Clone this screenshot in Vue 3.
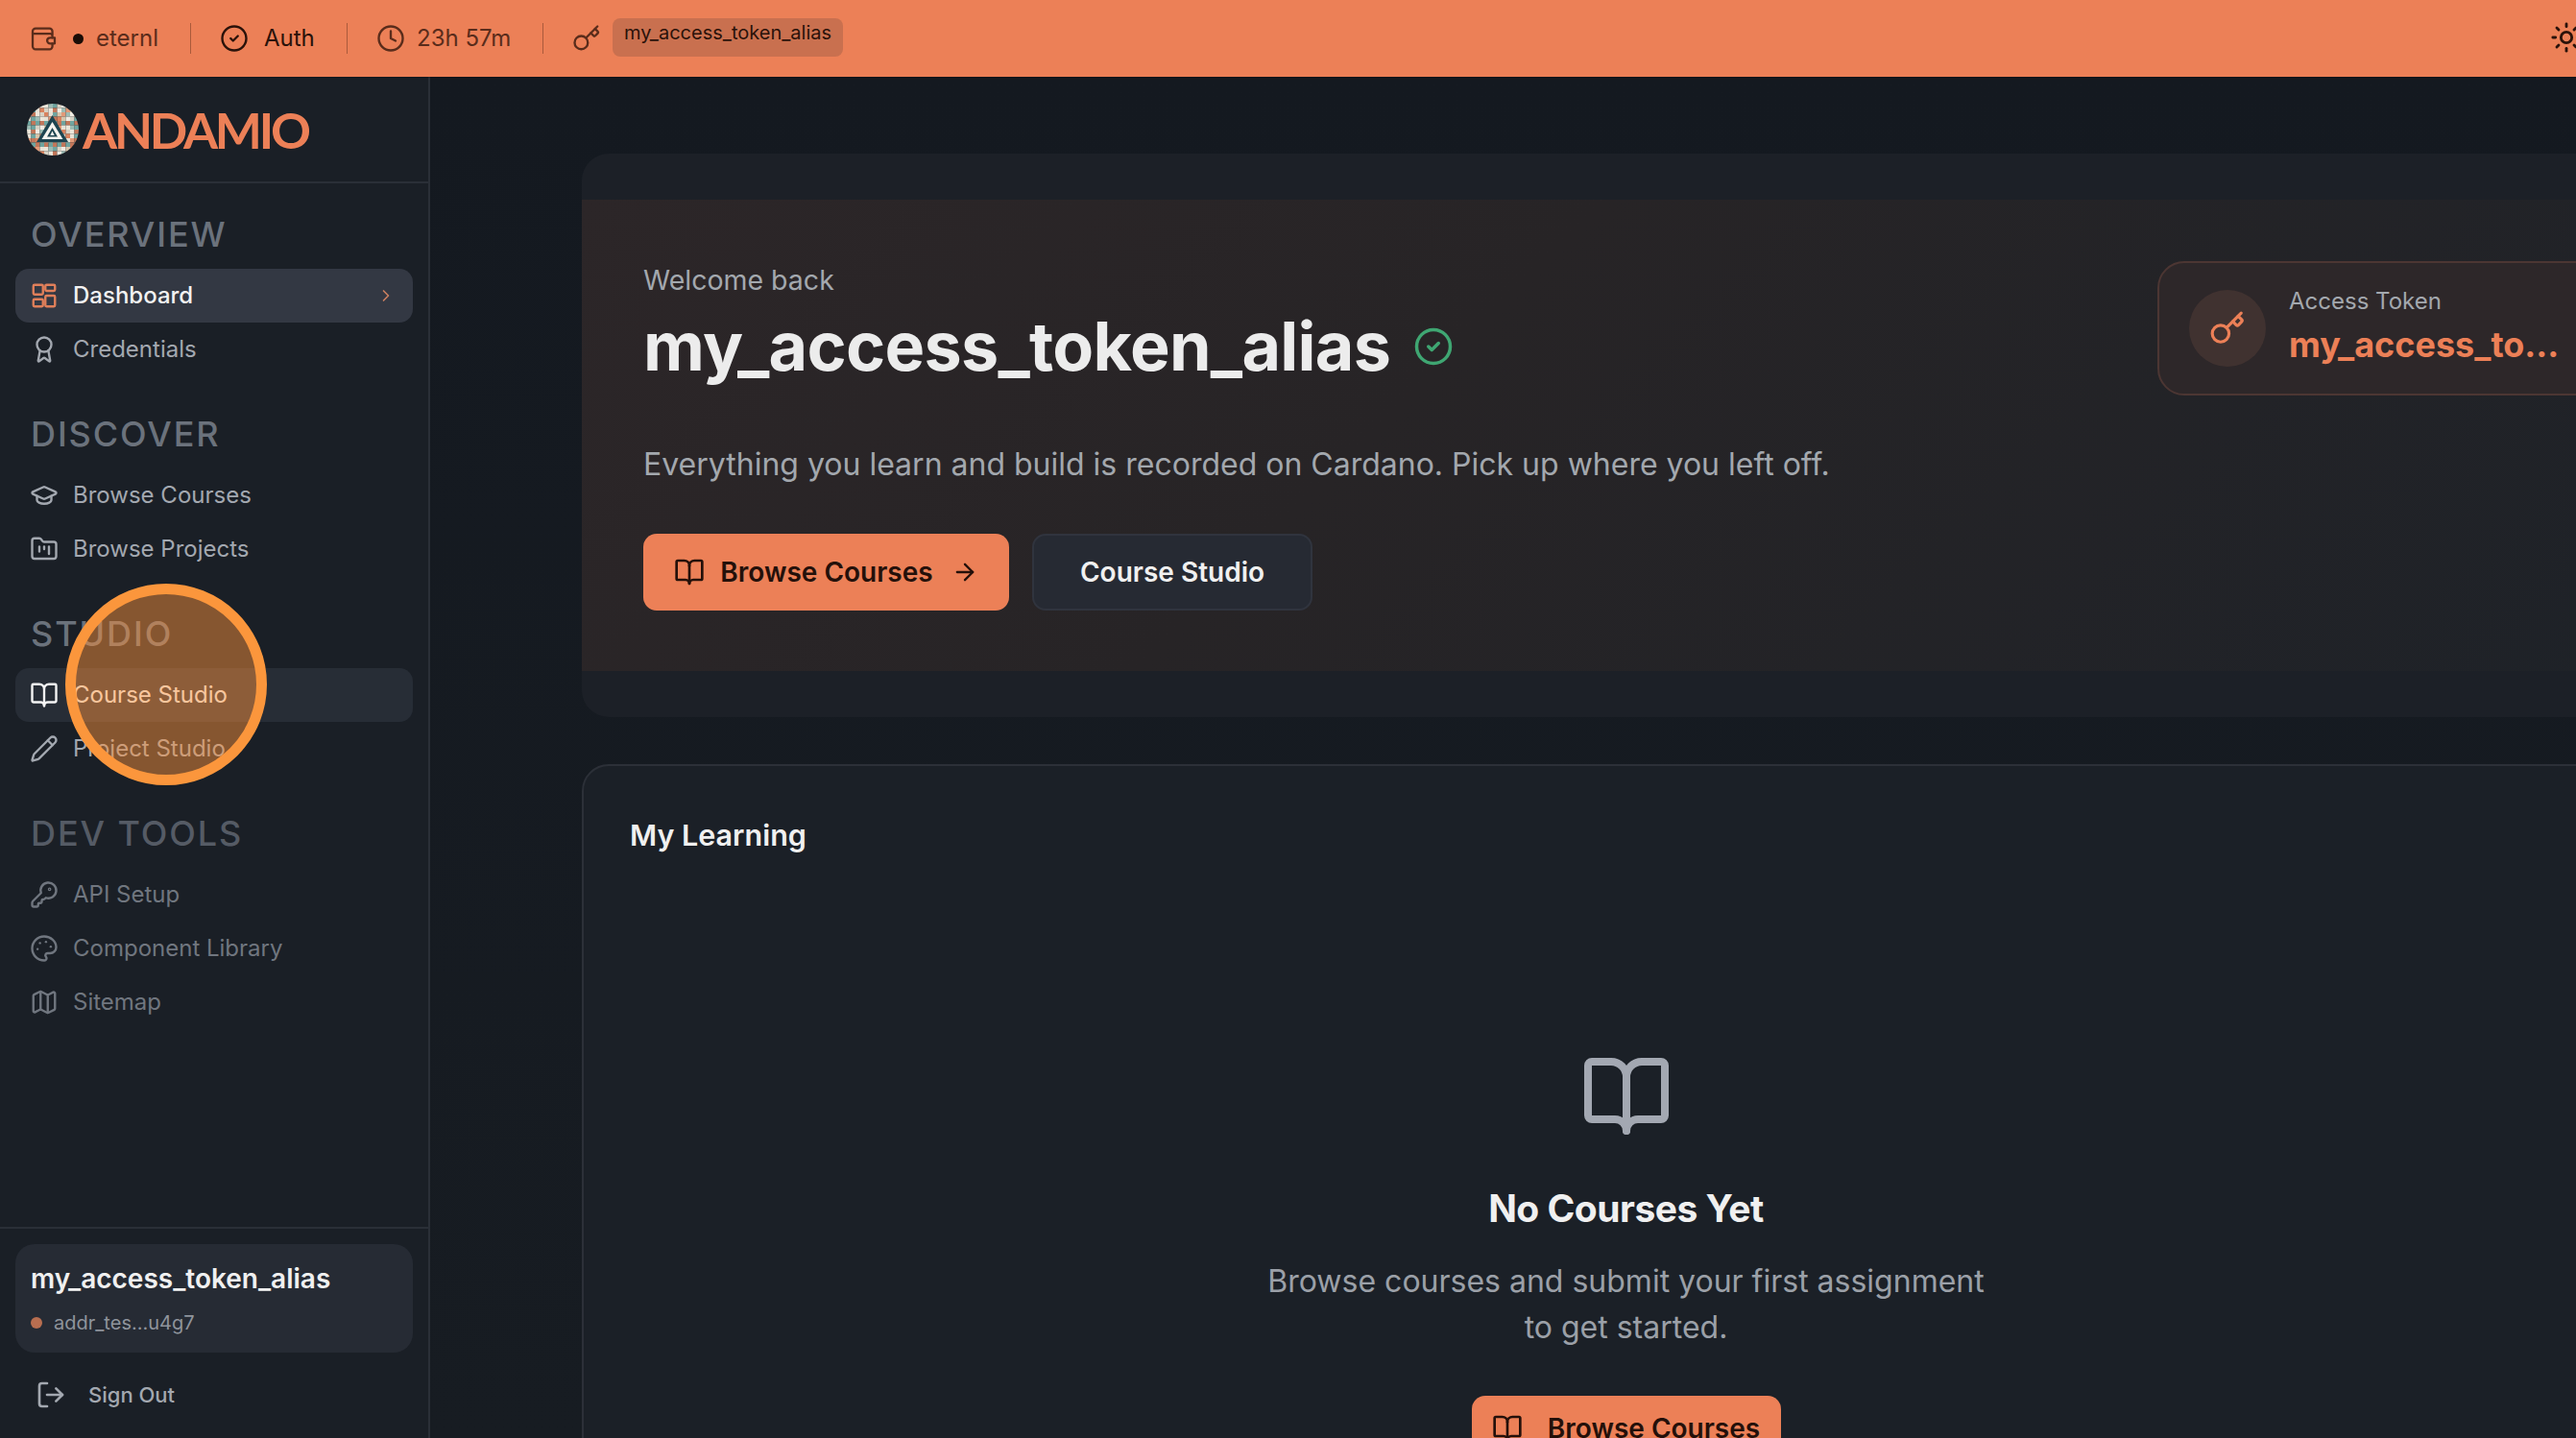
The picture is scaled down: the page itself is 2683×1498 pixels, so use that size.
<script setup>
const icons = {
  grid: { d: ['M4 3h6a1 1 0 0 1 1 1v6a1 1 0 0 1-1 1H4a1 1 0 0 1-1-1V4a1 1 0 0 1 1-1z', 'M14 3h6a1 1 0 0 1 1 1v3a1 1 0 0 1-1 1h-6a1 1 0 0 1-1-1V4a1 1 0 0 1 1-1z', 'M14 12h6a1 1 0 0 1 1 1v7a1 1 0 0 1-1 1h-6a1 1 0 0 1-1-1v-7a1 1 0 0 1 1-1z', 'M4 15h6a1 1 0 0 1 1 1v4a1 1 0 0 1-1 1H4a1 1 0 0 1-1-1v-4a1 1 0 0 1 1-1z'] },
  award: { d: ['M15.477 12.89l1.515 8.526a.5.5 0 0 1-.81.47l-3.58-2.687a1 1 0 0 0-1.197 0l-3.586 2.686a.5.5 0 0 1-.81-.469l1.514-8.526', 'M18 8a6 6 0 1 1-12 0 6 6 0 0 1 12 0z'] },
  cap: { d: ['M21.42 10.922a1 1 0 0 0-.019-1.838L12.83 5.18a2 2 0 0 0-1.66 0L2.6 9.08a1 1 0 0 0 0 1.832l8.57 3.908a2 2 0 0 0 1.66 0z', 'M6 12.5V16a6 3 0 0 0 12 0v-3.5'] },
  folder: { d: ['M4 20h16a2 2 0 0 0 2-2V8a2 2 0 0 0-2-2h-7.93a2 2 0 0 1-1.66-.9l-.82-1.2A2 2 0 0 0 7.93 3H4a2 2 0 0 0-2 2v13c0 1.1.9 2 2 2Z', 'M8 10v4', 'M12 10v2', 'M16 10v6'] },
  book: { d: ['M12 7v14', 'M3 18a1 1 0 0 1-1-1V4a1 1 0 0 1 1-1h5a4 4 0 0 1 4 4 4 4 0 0 1 4-4h5a1 1 0 0 1 1 1v13a1 1 0 0 1-1 1h-6a3 3 0 0 0-3 3 3 3 0 0 0-3-3z'] },
  pencil: { d: ['M21.174 6.812a1 1 0 0 0-3.986-3.987L3.842 16.174a2 2 0 0 0-.5.83l-1.321 4.352a.5.5 0 0 0 .623.622l4.353-1.32a2 2 0 0 0 .83-.497z', 'M15 5l4 4'] },
  keyRound: { d: ['M2.586 17.414A2 2 0 0 0 2 18.828V21a1 1 0 0 0 1 1h3a1 1 0 0 0 1-1v-1a1 1 0 0 1 1-1h1a1 1 0 0 0 1-1v-1a1 1 0 0 1 1-1h.172a2 2 0 0 0 1.414-.586l.814-.814a6.5 6.5 0 1 0-4-4z', 'M17 7.5a.5.5 0 1 1-1 0 .5.5 0 0 1 1 0z'] },
  palette: { d: ['M12 22a1 1 0 0 1 0-20 10 9 0 0 1 10 9 5 5 0 0 1-5 5h-2.25a1.75 1.75 0 0 0-1.4 2.8l.3.4a1.75 1.75 0 0 1-1.4 2.8z', 'M13.5 6.5h.01', 'M17.5 10.5h.01', 'M6.5 12.5h.01', 'M8.5 7.5h.01'] },
  map: { d: ['M14.106 5.553a2 2 0 0 0 1.788 0l3.659-1.83A1 1 0 0 1 21 4.619v12.764a1 1 0 0 1-.553.894l-4.553 2.277a2 2 0 0 1-1.788 0l-4.212-2.106a2 2 0 0 0-1.788 0l-3.659 1.83A1 1 0 0 1 3 19.381V6.618a1 1 0 0 1 .553-.894l4.553-2.277a2 2 0 0 1 1.788 0z', 'M15 5.764v15', 'M9 3.236v15'] },
  logout: { d: ['M16 17l5-5-5-5', 'M21 12H9', 'M9 21H5a2 2 0 0 1-2-2V5a2 2 0 0 1 2-2h4'] },
  key: { d: ['M15.5 7.5l2.3 2.3a1 1 0 0 0 1.4 0l2.1-2.1a1 1 0 0 0 0-1.4L19 4', 'M21 2l-9.6 9.6', 'M13 15.5a5.5 5.5 0 1 1-11 0 5.5 5.5 0 0 1 11 0z'] },
  sun: { d: ['M16 12a4 4 0 1 1-8 0 4 4 0 0 1 8 0z', 'M12 2v2', 'M12 20v2', 'M4.93 4.93l1.41 1.41', 'M17.66 17.66l1.41 1.41', 'M2 12h2', 'M20 12h2', 'M6.34 17.66l-1.41 1.41', 'M19.07 4.93l-1.41 1.41'] },
  check: { d: ['M22 12a10 10 0 1 1-20 0 10 10 0 0 1 20 0z', 'M9 12l2 2 4-4'] },
  clock: { d: ['M22 12a10 10 0 1 1-20 0 10 10 0 0 1 20 0z', 'M12 6v6l4 2'] },
  arrow: { d: ['M5 12h14', 'M12 5l7 7-7 7'] },
  chevron: { d: ['M9 18l6-6-6-6'] },
  wallet: { d: ['M19.5 8V5.500A2.500 2.500 0 0 0 17 3H5a2.500 2.500 0 0 0-2.500 2.500v13A2.500 2.500 0 0 0 5 21h12a2.500 2.500 0 0 0 2.500-2.500V16', 'M2.500 7.500H17.500a2 2 0 0 1 2 2V11', 'M17.500 11h4v5h-4a2.500 2.500 0 0 1 0-5z'] },
}
const sections = [
  { title: 'OVERVIEW', dim: false, items: [
    { label: 'Dashboard', icon: 'grid', state: 'active' },
    { label: 'Credentials', icon: 'award' },
  ] },
  { title: 'DISCOVER', dim: false, items: [
    { label: 'Browse Courses', icon: 'cap' },
    { label: 'Browse Projects', icon: 'folder' },
  ] },
  { title: 'STUDIO', dim: false, items: [
    { label: 'Course Studio', icon: 'book', state: 'hover' },
    { label: 'Project Studio', icon: 'pencil' },
  ] },
  { title: 'DEV TOOLS', dim: true, items: [
    { label: 'API Setup', icon: 'keyRound' },
    { label: 'Component Library', icon: 'palette' },
    { label: 'Sitemap', icon: 'map' },
  ] },
]
const tiles = []
const tileColors = ['#d9835f', '#e8e2d6', '#6fa5a0', '#d6c6ac', '#e29a78', '#9dbcb4', '#f0ebe2', '#c2775a', '#ece6da', '#d8d2c4']
for (let y = 0; y < 12; y++) {
  for (let x = 0; x < 12; x++) {
    tiles.push({ x: x * 4.5, y: y * 4.5, c: tileColors[(x * 7 + y * 3 + x * y * 2) % tileColors.length] })
  }
}
</script>

<template>
  <div class="viewport">
    <header class="topbar">
      <div class="tb-group tb-wallet">
        <svg class="ic tb-ic wallet-ic soft" viewBox="0 0 24 24"><path v-for="p in icons.wallet.d" :key="p" :d="p" /></svg>
        <span class="tb-dot"></span>
        <span class="tb-text soft">eternl</span>
      </div>
      <span class="tb-div"></span>
      <div class="tb-group tb-auth">
        <svg class="ic tb-ic" viewBox="0 0 24 24"><path v-for="p in icons.check.d" :key="p" :d="p" /></svg>
        <span class="tb-text">Auth</span>
      </div>
      <span class="tb-div"></span>
      <div class="tb-group tb-time">
        <svg class="ic tb-ic soft" viewBox="0 0 24 24"><path v-for="p in icons.clock.d" :key="p" :d="p" /></svg>
        <span class="tb-text soft">23h 57m</span>
      </div>
      <span class="tb-div"></span>
      <div class="tb-group tb-key">
        <svg class="ic tb-ic soft" viewBox="0 0 24 24"><path v-for="p in icons.key.d" :key="p" :d="p" /></svg>
        <span class="tb-chip">my_access_token_alias</span>
      </div>
      <svg class="ic tb-sun" viewBox="0 0 24 24"><path v-for="p in icons.sun.d" :key="p" :d="p" /></svg>
    </header>

    <div class="body">
      <aside class="sidebar">
        <div class="brand">
          <svg class="logo-mark" viewBox="0 0 54 54">
            <defs><clipPath id="logoClip"><circle cx="27" cy="27" r="27" /></clipPath></defs>
            <g clip-path="url(#logoClip)">
              <rect v-for="(t, i) in tiles" :key="i" :x="t.x" :y="t.y" width="4.5" height="4.5" :fill="t.c" />
              <path d="M26.500 12 L43 40 H10 Z" fill="#1d4450" />
              <path d="M26.500 19 L37.500 37 H15.500 Z" fill="#f6f4ef" />
              <path d="M26.500 25 L32 34.500 H21 Z" fill="#1d4450" />
              <path d="M26.500 28.500 L28.700 33 H24.300 Z" fill="#f6f4ef" />
            </g>
          </svg>
          <span class="logo-text">ANDAMIO</span>
        </div>

        <nav class="nav">
          <section v-for="s in sections" :key="s.title" class="nav-sec" :class="{ dim: s.dim }">
            <h3 class="nav-title">{{ s.title }}</h3>
            <a v-for="it in s.items" :key="it.label" class="nav-item" :class="it.state">
              <svg class="ic nav-ic" viewBox="0 0 24 24"><path v-for="p in icons[it.icon].d" :key="p" :d="p" /></svg>
              <span>{{ it.label }}</span>
              <svg v-if="it.state === 'active'" class="ic nav-chev" viewBox="0 0 24 24"><path v-for="p in icons.chevron.d" :key="p" :d="p" /></svg>
            </a>
          </section>
        </nav>

        <div class="side-foot">
          <div class="user-card">
            <div class="user-name">my_access_token_alias</div>
            <div class="user-addr"><span class="addr-dot"></span>addr_tes...u4g7</div>
          </div>
          <a class="signout">
            <svg class="ic so-ic" viewBox="0 0 24 24"><path v-for="p in icons.logout.d" :key="p" :d="p" /></svg>
            <span>Sign Out</span>
          </a>
        </div>
      </aside>

      <main class="main">
        <section class="hero-card">
          <div class="hero">
            <div class="hero-left">
              <div class="welcome">Welcome back</div>
              <div class="hero-name">
                <h1>my_access_token_alias</h1>
                <svg class="ic verified" viewBox="0 0 24 24"><path v-for="p in icons.check.d" :key="p" :d="p" /></svg>
              </div>
              <p class="hero-desc">Everything you learn and build is recorded on Cardano. Pick up where you left off.</p>
              <div class="hero-actions">
                <button class="btn primary">
                  <svg class="ic btn-ic" viewBox="0 0 24 24"><path v-for="p in icons.book.d" :key="p" :d="p" /></svg>
                  <span>Browse Courses</span>
                  <svg class="ic btn-arrow" viewBox="0 0 24 24"><path v-for="p in icons.arrow.d" :key="p" :d="p" /></svg>
                </button>
                <button class="btn ghost">Course Studio</button>
              </div>
            </div>
            <div class="token-card">
              <span class="token-circle">
                <svg class="ic token-ic" viewBox="0 0 24 24"><path v-for="p in icons.key.d" :key="p" :d="p" /></svg>
              </span>
              <div class="token-text">
                <div class="token-label">Access Token</div>
                <div class="token-value">my_access_to...</div>
              </div>
            </div>
          </div>
        </section>

        <section class="learn-card">
          <h2 class="learn-title">My Learning</h2>
          <div class="empty">
            <svg class="ic empty-ic" viewBox="0 0 24 24"><path v-for="p in icons.book.d" :key="p" :d="p" /></svg>
            <h3 class="empty-title">No Courses Yet</h3>
            <p class="empty-desc">Browse courses and submit your first assignment<br />to get started.</p>
            <button class="btn primary empty-btn">
              <svg class="ic btn-ic" viewBox="0 0 24 24"><path v-for="p in icons.book.d" :key="p" :d="p" /></svg>
              <span>Browse Courses</span>
            </button>
          </div>
        </section>
      </main>
    </div>

    <div class="cursor-ring"></div>
  </div>
</template>

<style>
html, body { margin: 0; background: #14191f; }
</style>

<style scoped>
.viewport {
  position: relative;
  width: 2683px;
  height: 1498px;
  overflow: hidden;
  background: #14191f;
  font-family: Inter, "Noto Sans", sans-serif;
  color: #eceded;
}
.ic { fill: none; stroke: currentColor; stroke-width: 2; stroke-linecap: round; stroke-linejoin: round; flex: none; display: block; }

.topbar {
  width: 2690px;
  height: 80px;
  box-sizing: border-box;
  padding-left: 31px;
  display: flex;
  align-items: center;
  background: #ec8057;
  color: #2a120a;
  box-shadow: 0 1px 2px rgba(0,0,0,.3);
  position: relative;
  z-index: 2;
}
.tb-group { display: flex; align-items: center; }
.tb-ic { width: 30px; height: 30px; stroke-width: 1.9; }
.wallet-ic { width: 29px; height: 29px; }
.soft { color: #5a2c1b; }
.tb-text { font-size: 24px; line-height: 32px; }
.tb-wallet { width: 167px; }
.tb-dot { width: 11px; height: 11px; border-radius: 50%; background: #1a0c06; margin: 0 13px 0 16px; }
.tb-div { width: 1px; height: 32px; background: rgba(90,44,27,.45); }
.tb-auth { margin-left: 30px; width: 132px; gap: 16px; }
.tb-time { margin-left: 30px; width: 173px; gap: 12px; }
.tb-key { margin-left: 30px; gap: 12px; }
.tb-chip {
  width: 240px;
  height: 40px;
  box-sizing: border-box;
  margin-top: -2px;
  padding-top: 2px;
  border-radius: 8px;
  background: #c9704f;
  color: #2a120a;
  font-size: 20px;
  line-height: 26px;
  text-align: center;
}
.tb-sun { width: 34px; height: 34px; margin-left: auto; margin-top: -2px; color: #2a120a; }

.body { display: flex; width: 2942px; height: 1418px; }

.sidebar {
  width: 448px;
  height: 1418px;
  flex: none;
  box-sizing: border-box;
  background: #1a1f26;
  border-right: 2px solid #2a2f37;
  display: flex;
  flex-direction: column;
}
.brand {
  height: 111px;
  box-sizing: border-box;
  border-bottom: 2px solid #2a2f37;
  padding-left: 28px;
  display: flex;
  align-items: center;
  gap: 4px;
}
.logo-mark { width: 54px; height: 54px; flex: none; }
.logo-text {
  font-family: Lato, sans-serif;
  font-weight: 700;
  font-size: 52px;
  line-height: 60px;
  letter-spacing: -3.2px;
  color: #ec8057;
}
.nav { flex: 1; padding: 31px 16px 0; box-sizing: border-box; display: flex; flex-direction: column; gap: 38px; }
.nav-title {
  margin: 0 0 14px;
  padding-left: 16px;
  font-size: 36px;
  line-height: 44px;
  font-weight: 500;
  letter-spacing: 1.9px;
  color: #6b727c;
}
.nav-item {
  height: 56px;
  display: flex;
  align-items: center;
  padding: 0 18px 1px 15px;
  box-sizing: border-box;
  border-radius: 14px;
  color: #a3a8b0;
  font-size: 24px;
  font-weight: 400;
  gap: 15px;
}
.nav-ic { width: 30px; height: 30px; stroke-width: 1.9; }
.nav-item.active { background: #333843; color: #f2f2f2; font-weight: 500; }
.nav-item.active .nav-ic { color: #e07f5a; }
.nav-chev { width: 20px; height: 20px; margin-left: auto; color: #c97f60; stroke-width: 2; }
.nav-item.hover { background: #272d36; color: #f5f5f5; }
.nav-sec.dim .nav-title { color: #555b65; }
.nav-sec.dim .nav-item { color: #70767f; }

.side-foot { box-sizing: border-box; border-top: 2px solid #2a2f37; padding: 16px 16px 0; height: 220px; }
.user-card {
  height: 113px;
  box-sizing: border-box;
  padding: 18px 16px 0;
  border-radius: 20px;
  background: #262b34;
}
.user-name { font-size: 28px; line-height: 36px; font-weight: 600; color: #f0f0f0; }
.user-addr { margin-top: 15px; display: flex; align-items: center; gap: 12px; font-size: 20px; line-height: 26px; color: #8f949c; }
.addr-dot { width: 12px; height: 12px; border-radius: 50%; background: #b86e50; }
.signout { margin-top: 27px; padding-left: 21px; display: flex; align-items: center; gap: 23px; font-size: 22px; line-height: 34px; font-weight: 500; color: #a3a8b0; }
.so-ic { width: 32px; height: 32px; }

.main {
  flex: 1;
  min-width: 0;
  padding: 80px 158px 0;
  box-sizing: border-box;
  background: linear-gradient(180deg, #141920 0%, #171c22 100%);
}
.hero-card {
  padding: 48px 0;
  border-radius: 28px;
  background: #1c2027;
}
.hero {
  height: 491px;
  box-sizing: border-box;
  padding: 64px 64px 0;
  display: flex;
  justify-content: space-between;
  background: linear-gradient(135deg, #2c2628 0%, #272426 40%, #1e2228 100%);
}
.welcome { font-size: 28.500px; line-height: 38px; margin-top: 1px; color: #a3a8ae; }
.hero-name { display: flex; align-items: center; gap: 24px; margin-top: 10px; height: 80px; }
.hero-name h1 { margin: 0; font-size: 70px; line-height: 80px; font-weight: 700; letter-spacing: -0.7px; color: #ececec; }
.verified { width: 42px; height: 42px; color: #3fa672; }
.hero-desc { margin: 59px 0 0; font-size: 32px; line-height: 48px; color: #a3a8ae; }
.hero-actions { display: flex; gap: 24px; margin-top: 48px; }
.btn {
  height: 80px;
  box-sizing: border-box;
  border-radius: 14px;
  font-family: inherit;
  font-size: 28px;
  font-weight: 600;
  display: flex;
  align-items: center;
  justify-content: center;
}
.primary { background: #ec8057; color: #24100a; border: 0; }
.hero-actions .primary { width: 381px; gap: 16px; }
.btn-ic { width: 32px; height: 32px; }
.btn-arrow { width: 28px; height: 28px; margin-left: 3px; }
.ghost { width: 292px; background: #262a33; color: #f0f0f0; border: 2px solid #30343e; }
.token-card {
  width: 473px;
  height: 140px;
  box-sizing: border-box;
  padding-left: 31px;
  display: flex;
  align-items: center;
  gap: 24px;
  border-radius: 28px;
  border: 2px solid #4c3633;
  background: #2d2729;
  align-self: flex-start;
}
.token-circle { width: 80px; height: 80px; border-radius: 50%; background: #403230; color: #ec8057; display: flex; align-items: center; justify-content: center; flex: none; }
.token-ic { width: 38px; height: 38px; }
.token-text { padding-bottom: 4px; }
.token-label { font-size: 24px; line-height: 32px; color: #a3a8ae; }
.token-value { margin-top: 6px; font-size: 36px; line-height: 46px; font-weight: 700; color: #ec8057; white-space: nowrap; }

.learn-card {
  margin-top: 49px;
  height: 900px;
  box-sizing: border-box;
  border: 2px solid #2c3038;
  border-radius: 28px;
  background: #1b2027;
  padding: 50px 51px 0 48px;
}
.learn-title { margin: 0; font-size: 30.500px; line-height: 44px; font-weight: 600; color: #f0f0f0; }
.empty { display: flex; flex-direction: column; align-items: center; margin-top: 202px; }
.empty-ic { width: 96px; height: 96px; color: #a3a8b2; }
.empty-title { margin: 41px 0 0; font-size: 39px; line-height: 56px; font-weight: 700; letter-spacing: -0.5px; color: #f0f0f0; }
.empty-desc { margin: 24px 0 0; font-size: 32px; line-height: 48px; color: #9ba0a8; text-align: center; }
.empty-btn { width: 322px; height: 68px; gap: 26px; margin-top: 47px; }
.empty-btn .btn-ic { width: 32px; height: 32px; }

.cursor-ring {
  position: absolute;
  left: 68px;
  top: 608px;
  width: 210px;
  height: 210px;
  box-sizing: border-box;
  border-radius: 50%;
  border: 11px solid #fb963c;
  background: rgba(252, 146, 60, .48);
  z-index: 3;
}
</style>
